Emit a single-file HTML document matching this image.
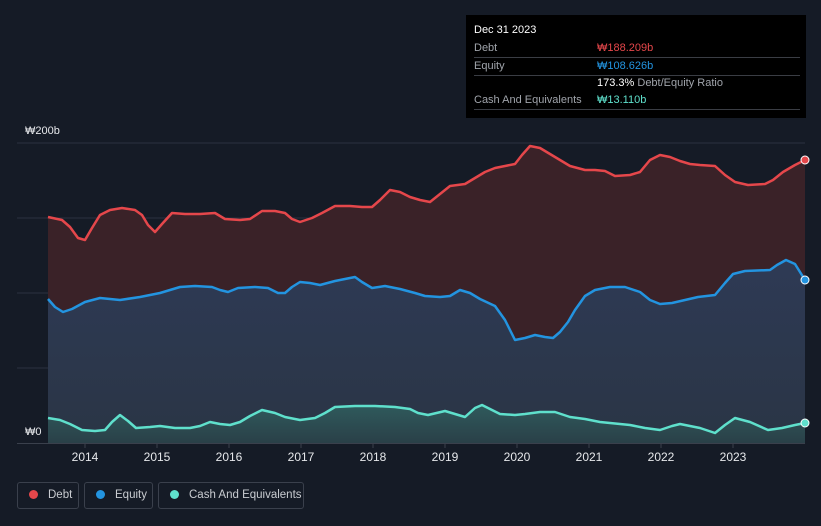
<!DOCTYPE html>
<html><head><meta charset="utf-8"><style>
html,body{margin:0;width:821px;height:526px;overflow:hidden}
body{background:#151b26;font-family:"Liberation Sans","Noto Sans CJK KR",sans-serif;position:relative;color:#fff}
.tt{position:absolute;left:466px;top:15px;width:340px;height:103px;background:#000;font-size:11px}
.tt .r{position:absolute;left:8px;right:6px;border-bottom:1px solid #3a3d44;height:17px;line-height:17px;color:#a0a4ab}
.tt .v{position:absolute;left:123px}
.leg{position:absolute;top:482px;height:27px;border:1px solid #3a404c;border-radius:3px;font-size:11.5px;line-height:25px;color:#c9ccd1;box-sizing:border-box;white-space:nowrap;overflow:hidden}
.leg i{display:inline-block;width:9px;height:9px;border-radius:50%;margin:0 10px 0 11px;vertical-align:-1px}
.yr{position:absolute;top:450px;font-size:12px;color:#e6e8eb;transform:translateX(-50%)}
</style></head><body>
<svg width="821" height="526" style="position:absolute;left:0;top:0">
<defs>
<linearGradient id="ge" x1="0" y1="0" x2="0" y2="1"><stop offset="0" stop-color="#2e3a55"/><stop offset="1" stop-color="#2a3545"/></linearGradient>
<linearGradient id="gc" x1="0" y1="0" x2="0" y2="1"><stop offset="0" stop-color="#2f5a5c"/><stop offset="1" stop-color="#2a4048"/></linearGradient>
</defs>
<g stroke="#2c3240" stroke-width="1"><line x1="17" y1="143" x2="805" y2="143"/><line x1="17" y1="218" x2="805" y2="218"/><line x1="17" y1="293" x2="805" y2="293"/><line x1="17" y1="368" x2="805" y2="368"/></g>
<polygon fill="#3a2228" points="48,443 48,217 62,220 70,227 78,238 85,240 92,228 100,215 110,210 122,208 135,210 142,215 148,225 155,232 162,224 172,213 185,214 200,214 215,213 225,219 240,220 250,219 262,211 275,211 285,213 292,219 300,222 312,218 322,213 335,206 350,206 362,207 372,207 380,200 390,190 400,192 410,197 420,200 430,202 440,194 450,186 465,184 475,178 485,172 495,168 505,166 515,164 522,155 530,146 540,148 550,154 560,160 570,166 585,170 595,170 605,171 615,176 630,175 640,172 650,160 660,155 670,157 680,161 690,164 700,165 715,166 725,175 735,182 748,185 765,184 773,180 783,172 795,165 805,160 805,443"/>
<polygon fill="url(#ge)" points="48,443 48,299 55,307 63,312 72,309 85,302 100,298 120,300 140,297 160,293 180,287 195,286 212,287 220,290 228,292 238,288 255,287 268,288 278,293 285,293 292,287 300,282 310,283 320,285 335,281 355,277 362,282 372,288 385,286 400,289 415,293 425,296 440,297 450,296 460,290 470,293 480,299 495,306 505,320 515,340 525,338 535,335 545,337 553,338 560,332 568,322 575,310 585,296 595,290 610,287 625,287 640,292 650,300 660,304 672,303 685,300 698,297 715,295 725,283 733,274 745,271 770,270 777,265 786,260 795,264 805,280 805,443"/>
<polygon fill="url(#gc)" points="48,443 48,418 60,420 70,424 82,430 95,431 105,430 112,422 120,415 128,421 136,428 150,427 160,426 175,428 190,428 200,426 210,422 220,424 230,425 240,422 250,416 262,410 275,413 285,417 300,420 315,418 325,413 335,407 355,406 375,406 395,407 410,409 418,413 428,415 445,411 455,414 465,417 475,408 482,405 490,409 500,414 515,415 525,414 540,412 555,412 570,417 585,419 600,422 630,425 645,428 660,430 672,426 680,424 700,428 715,433 725,425 735,418 750,422 768,430 782,428 795,425 805,423 805,443"/>
<g fill="none" stroke-width="2.5" stroke-linejoin="round">
<polyline stroke="#e5474b" points="48,217 62,220 70,227 78,238 85,240 92,228 100,215 110,210 122,208 135,210 142,215 148,225 155,232 162,224 172,213 185,214 200,214 215,213 225,219 240,220 250,219 262,211 275,211 285,213 292,219 300,222 312,218 322,213 335,206 350,206 362,207 372,207 380,200 390,190 400,192 410,197 420,200 430,202 440,194 450,186 465,184 475,178 485,172 495,168 505,166 515,164 522,155 530,146 540,148 550,154 560,160 570,166 585,170 595,170 605,171 615,176 630,175 640,172 650,160 660,155 670,157 680,161 690,164 700,165 715,166 725,175 735,182 748,185 765,184 773,180 783,172 795,165 805,160"/>
<polyline stroke="#2394e0" points="48,299 55,307 63,312 72,309 85,302 100,298 120,300 140,297 160,293 180,287 195,286 212,287 220,290 228,292 238,288 255,287 268,288 278,293 285,293 292,287 300,282 310,283 320,285 335,281 355,277 362,282 372,288 385,286 400,289 415,293 425,296 440,297 450,296 460,290 470,293 480,299 495,306 505,320 515,340 525,338 535,335 545,337 553,338 560,332 568,322 575,310 585,296 595,290 610,287 625,287 640,292 650,300 660,304 672,303 685,300 698,297 715,295 725,283 733,274 745,271 770,270 777,265 786,260 795,264 805,280"/>
<polyline stroke="#5fe0cc" points="48,418 60,420 70,424 82,430 95,431 105,430 112,422 120,415 128,421 136,428 150,427 160,426 175,428 190,428 200,426 210,422 220,424 230,425 240,422 250,416 262,410 275,413 285,417 300,420 315,418 325,413 335,407 355,406 375,406 395,407 410,409 418,413 428,415 445,411 455,414 465,417 475,408 482,405 490,409 500,414 515,415 525,414 540,412 555,412 570,417 585,419 600,422 630,425 645,428 660,430 672,426 680,424 700,428 715,433 725,425 735,418 750,422 768,430 782,428 795,425 805,423"/>
</g>
<line x1="17" y1="443.5" x2="805" y2="443.5" stroke="#3a404c"/>
<g stroke="#3a404c"><line x1="85" y1="443" x2="85" y2="448"/><line x1="157" y1="443" x2="157" y2="448"/><line x1="229" y1="443" x2="229" y2="448"/><line x1="301" y1="443" x2="301" y2="448"/><line x1="373" y1="443" x2="373" y2="448"/><line x1="445" y1="443" x2="445" y2="448"/><line x1="517" y1="443" x2="517" y2="448"/><line x1="589" y1="443" x2="589" y2="448"/><line x1="661" y1="443" x2="661" y2="448"/><line x1="733" y1="443" x2="733" y2="448"/></g>
<circle cx="805" cy="160" r="4" fill="#e5474b" stroke="#fff" stroke-width="1"/>
<circle cx="805" cy="280" r="4" fill="#2394e0" stroke="#fff" stroke-width="1"/>
<circle cx="805" cy="423" r="4" fill="#5fe0cc" stroke="#fff" stroke-width="1"/>
<rect x="17" y="424" width="31" height="18" fill="#151b26"/>
</svg>
<div style="position:absolute;left:25px;top:125px;font-size:11px;color:#e6e8eb">₩200b</div>
<div style="position:absolute;left:25px;top:426px;font-size:11px;color:#e6e8eb">₩0</div>
<div class="yr" style="left:85px">2014</div><div class="yr" style="left:157px">2015</div><div class="yr" style="left:229px">2016</div><div class="yr" style="left:301px">2017</div><div class="yr" style="left:373px">2018</div><div class="yr" style="left:445px">2019</div><div class="yr" style="left:517px">2020</div><div class="yr" style="left:589px">2021</div><div class="yr" style="left:661px">2022</div><div class="yr" style="left:733px">2023</div>
<div class="tt">
<div style="position:absolute;left:8px;top:9px;font-size:11px;color:#fff">Dec 31 2023</div>
<div class="r" style="top:25px">Debt<span class="v" style="color:#e5474b">₩188.209b</span></div>
<div class="r" style="top:43px">Equity<span class="v" style="color:#2394e0">₩108.626b</span></div>
<div class="r" style="top:60px;border:none"><span class="v"><b style="color:#fff;font-weight:normal">173.3%</b> Debt/Equity Ratio</span></div>
<div class="r" style="top:77px">Cash And Equivalents<span class="v" style="color:#5fe0cc">₩13.110b</span></div>
</div>
<div class="leg" style="left:17px;width:62px"><i style="background:#e5474b"></i>Debt</div>
<div class="leg" style="left:84px;width:69px"><i style="background:#2394e0"></i>Equity</div>
<div class="leg" style="left:158px;width:146px"><i style="background:#5fe0cc"></i>Cash And Equivalents</div>
</body></html>
